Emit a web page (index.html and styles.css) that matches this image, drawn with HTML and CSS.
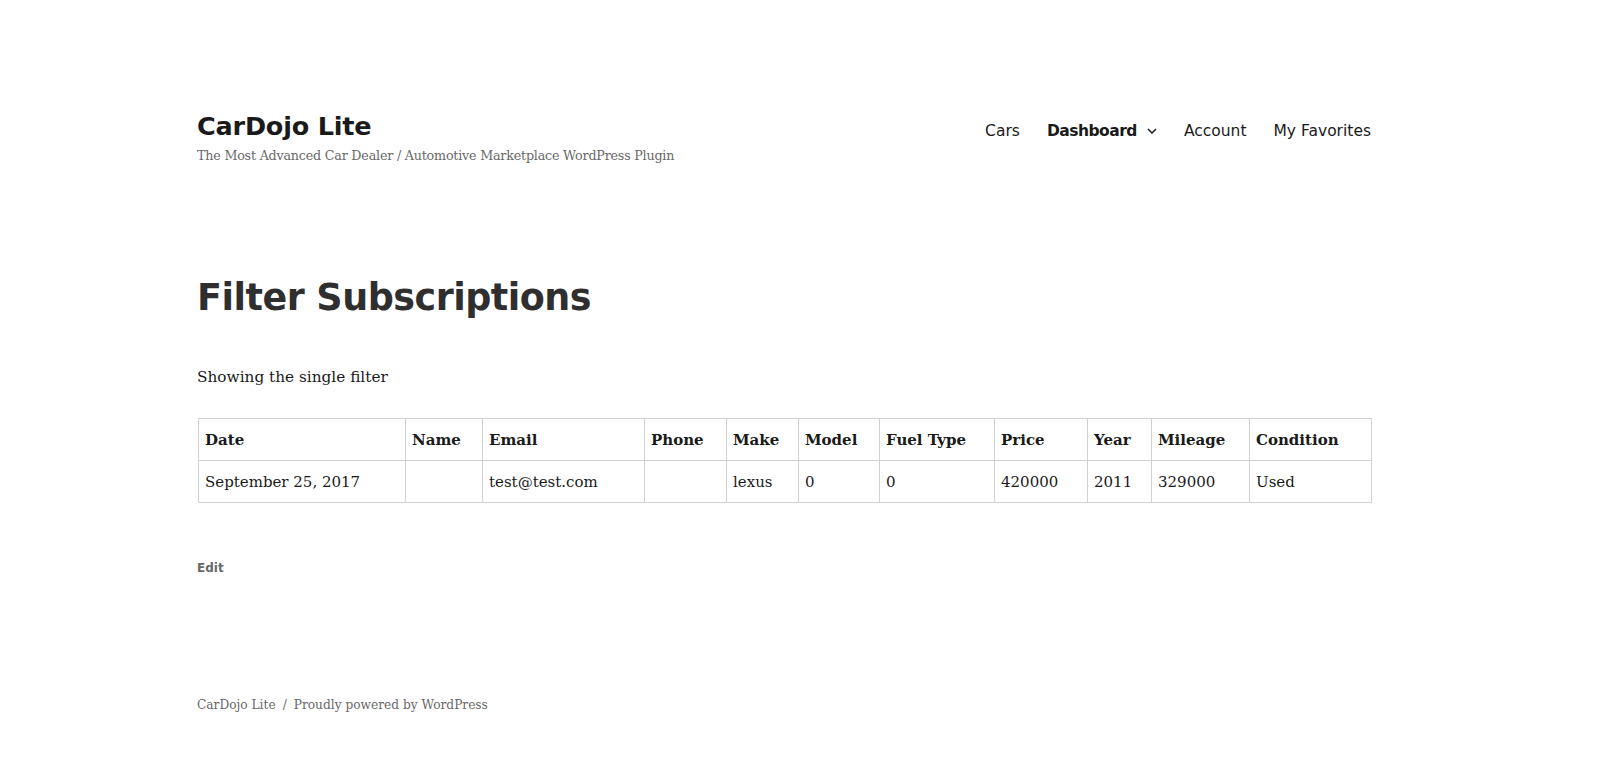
FILE: index.html
```html
<!DOCTYPE html>
<html lang="en">
<head>
<meta charset="utf-8">
<title>Filter Subscriptions – CarDojo Lite</title>
<link rel="stylesheet" href="styles.css">
</head>
<body>
<div class="site">
  <header class="site-header">
    <div class="branding">
      <div class="site-title">CarDojo Lite</div>
      <div class="site-description">The Most Advanced Car Dealer / Automotive Marketplace WordPress Plugin</div>
    </div>
    <nav class="main-nav">
      <a class="nav-item" href="#">Cars</a>
      <a class="nav-item current" href="#">Dashboard<svg class="chev" width="10" height="6" viewBox="0 0 10 6"><path d="M1 1l4 4 4-4" fill="none" stroke="#1a1a1a" stroke-width="1.5"/></svg></a>
      <a class="nav-item" href="#">Account</a>
      <a class="nav-item" href="#">My Favorites</a>
    </nav>
  </header>
  <main class="content">
    <h1 class="entry-title">Filter Subscriptions</h1>
    <p class="intro">Showing the single filter</p>
    <table class="subs">
      <colgroup>
        <col class="c1"><col class="c2"><col class="c3"><col class="c4"><col class="c5"><col class="c6"><col class="c7"><col class="c8"><col class="c9"><col class="c10"><col class="c11">
      </colgroup>
      <thead>
        <tr><th>Date</th><th>Name</th><th>Email</th><th>Phone</th><th>Make</th><th>Model</th><th>Fuel Type</th><th>Price</th><th>Year</th><th>Mileage</th><th>Condition</th></tr>
      </thead>
      <tbody>
        <tr><td>September 25, 2017</td><td></td><td>test@test.com</td><td></td><td>lexus</td><td>0</td><td>0</td><td>420000</td><td>2011</td><td>329000</td><td>Used</td></tr>
      </tbody>
    </table>
    <div class="edit-link"><a href="#">Edit</a></div>
  </main>
  <footer class="site-footer">
    <span>CarDojo Lite</span><span class="sep">/</span><span>Proudly powered by WordPress</span>
  </footer>
</div>
</body>
</html>
```
FILE: styles.css
```css
html, body { margin: 0; padding: 0; background: #fff; }
body { font-family: "DejaVu Serif", "Liberation Serif", serif; color: #1a1a1a; }
a { color: inherit; text-decoration: none; }
.site { width: 1174px; margin-left: 197px; }
.site-header { display: flex; justify-content: space-between; align-items: flex-start; padding-top: 108px; height: 166px; box-sizing: border-box; }
.site-title { font-family: "DejaVu Sans", sans-serif; font-weight: bold; font-size: 25.5px; line-height: 36px; color: #1a1a1a; letter-spacing: -0.2px; }
.site-description { font-size: 12.7px; line-height: 20px; color: #686868; margin-top: 2px; letter-spacing: -0.2px; }
.main-nav { display: flex; gap: 27px; padding-top: 12px; font-family: "DejaVu Sans", sans-serif; font-size: 15.5px; line-height: 22px; }
.nav-item { display: flex; align-items: center; color: #1a1a1a; }
.nav-item.current { font-weight: bold; letter-spacing: -0.5px; }
.chev { margin-left: 10px; }
.content { padding-top: 104px; }
.entry-title { font-family: "DejaVu Sans", sans-serif; font-weight: bold; font-size: 36.5px; line-height: 56px; margin: 0; color: #2f2f2f; letter-spacing: -0.5px; }
.intro { font-size: 15.3px; line-height: 28px; margin: 37px 0 0; }
.subs { margin-top: 27px; border-collapse: collapse; table-layout: fixed; width: 1173px; margin-left: 1px; font-size: 15px; }
.subs th, .subs td { border: 1px solid #d1d1d1; text-align: left; padding: 0 6px; height: 42px; box-sizing: border-box; }
.subs th { font-weight: bold; }
.c1 { width: 207px; } .c2 { width: 77px; } .c3 { width: 162px; } .c4 { width: 82px; }
.c5 { width: 72px; } .c6 { width: 81px; } .c7 { width: 115px; } .c8 { width: 93px; }
.c9 { width: 64px; } .c10 { width: 98px; } .c11 { width: 122px; }
.edit-link { margin-top: 56px; font-family: "DejaVu Sans", sans-serif; font-weight: bold; font-size: 12px; line-height: 18px; color: #686868; }
.site-footer { margin-top: 118px; font-size: 12.2px; line-height: 20px; color: #686868; }
.sep { margin: 0 7px; }
```
